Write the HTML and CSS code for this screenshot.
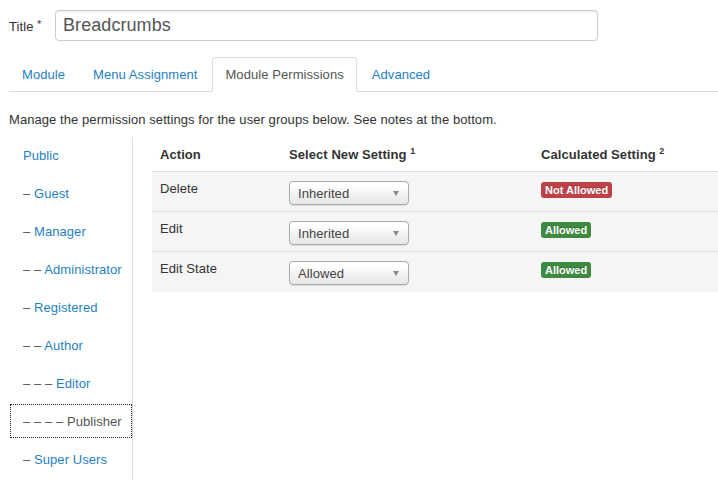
FILE: index.html
```html
<!DOCTYPE html>
<html>
<head>
<meta charset="utf-8">
<link rel="stylesheet" href="styles.css">
</head>
<body>
<div class="title-row">
  <label class="title-label">Title <span class="star">*</span></label>
  <div class="title-input">Breadcrumbs</div>
</div>

<ul class="tabs">
  <li class="tab"><a>Module</a></li>
  <li class="tab"><a>Menu Assignment</a></li>
  <li class="tab active"><a>Module Permissions</a></li>
  <li class="tab"><a>Advanced</a></li>
</ul>

<p class="intro">Manage the permission settings for the user groups below. See notes at the bottom.</p>

<div class="perm">
  <ul class="groups">
    <li class="group"><a>Public</a></li>
    <li class="group"><a><span class="lvl">–</span> Guest</a></li>
    <li class="group"><a><span class="lvl">–</span> Manager</a></li>
    <li class="group"><a><span class="lvl">– –</span> Administrator</a></li>
    <li class="group"><a><span class="lvl">–</span> Registered</a></li>
    <li class="group"><a><span class="lvl">– –</span> Author</a></li>
    <li class="group"><a><span class="lvl">– – –</span> Editor</a></li>
    <li class="group active"><a><span class="lvl">– – – –</span> Publisher</a></li>
    <li class="group"><a><span class="lvl">–</span> Super Users</a></li>
  </ul>

  <table class="ptable">
    <colgroup>
      <col class="c1"><col class="c2"><col class="c3">
    </colgroup>
    <thead>
      <tr>
        <th>Action</th>
        <th>Select New Setting <sup>1</sup></th>
        <th>Calculated Setting <sup>2</sup></th>
      </tr>
    </thead>
    <tbody>
      <tr>
        <td>Delete</td>
        <td><div class="select">Inherited<span class="caret"></span></div></td>
        <td><span class="badge badge-red">Not Allowed</span></td>
      </tr>
      <tr>
        <td>Edit</td>
        <td><div class="select">Inherited<span class="caret"></span></div></td>
        <td><span class="badge badge-green">Allowed</span></td>
      </tr>
      <tr>
        <td>Edit State</td>
        <td><div class="select">Allowed<span class="caret"></span></div></td>
        <td><span class="badge badge-green">Allowed</span></td>
      </tr>
    </tbody>
  </table>
</div>
</body>
</html>
```

FILE: styles.css
```css
* { box-sizing: border-box; }
html, body { background: #fff; }
body {
  margin: 0;
  padding: 10px 0 0 9px;
  font-family: "Liberation Sans", Arial, Helvetica, sans-serif;
  font-size: 13px;
  line-height: 18px;
  letter-spacing: 0.07px;
  color: #333;
}

.title-row {
  display: flex;
  align-items: center;
}
.title-label {
  width: 46px;
  font-size: 13px;
  color: #333;
}
.star {
  font-size: 11px;
  vertical-align: 3px;
}
.title-input {
  width: 543px;
  height: 31px;
  border: 1px solid #ccc;
  border-radius: 4px;
  box-shadow: inset 0 1px 1px rgba(0,0,0,0.075);
  padding: 0 7px;
  font-size: 18px;
  line-height: 29px;
  color: #555;
}

.tabs {
  list-style: none;
  margin: 16px 0 0 0;
  padding: 0;
  display: flex;
  border-bottom: 1px solid #ddd;
}
.tab {
  margin-right: 2px;
  margin-bottom: -1px;
}
.tab a {
  display: block;
  height: 35px;
  padding: 0 12px;
  line-height: 34px;
  color: #1f7fc3;
  border: 1px solid transparent;
  border-radius: 4px 4px 0 0;
}
.tab.active a {
  color: #555;
  background: #fff;
  border-color: #ddd #ddd transparent #ddd;
}

.intro {
  margin: 19px 0 8px 0;
  color: #333;
}

.perm {
  display: flex;
  align-items: flex-start;
}

.groups {
  list-style: none;
  margin: 0 19px 0 0;
  padding: 1px 0 4px 1px;
  width: 124px;
  border-right: 1px solid #ddd;
}
.group {
  margin-bottom: 4px;
}
.group:last-child { margin-bottom: 0; }
.group a {
  display: block;
  height: 34px;
  padding: 8px 12px;
  line-height: 18px;
  color: #1f7fc3;
  border: 1px solid transparent;
  white-space: nowrap;
}
.lvl { color: #555; }
.group.active a {
  color: #555;
  border: 1px dotted #222;
}

.ptable {
  border-collapse: collapse;
  width: 566px;
  table-layout: fixed;
}
.c1 { width: 129px; }
.c2 { width: 252px; }
.c3 { width: 185px; }
.ptable th {
  text-align: left;
  font-weight: bold;
  color: #333;
  padding: 9px 8px 7px 8px;
  height: 34px;
  vertical-align: top;
}
.ptable sup {
  font-size: 9px;
  line-height: 0;
  vertical-align: 5px;
}
.ptable td {
  border-top: 1px solid #ddd;
  background: #f5f5f5;
  padding: 8px 8px 7px 8px;
  height: 40px;
  vertical-align: top;
  color: #333;
}

.select {
  position: relative;
  width: 120px;
  height: 24px;
  margin-top: 1px;
  margin-bottom: -1px;
  border: 1px solid #aaa;
  border-radius: 4px;
  background: linear-gradient(#fff 20%, #f0f0f0 60%, #e8e8e8);
  box-shadow: 0 1px 1px rgba(0,0,0,0.1);
  padding: 0 8px;
  line-height: 24px;
  color: #444;
  font-size: 13px;
}
.caret {
  position: absolute;
  right: 9px;
  top: 9px;
  width: 0;
  height: 0;
  border-left: 3.5px solid transparent;
  border-right: 3.5px solid transparent;
  border-top: 5px solid #888;
}

.badge {
  display: inline-block;
  margin-top: 2px;
  padding: 0 4px;
  height: 16px;
  line-height: 16px;
  font-size: 11px;
  font-weight: bold;
  letter-spacing: 0;
  color: #fff;
  border-radius: 3px;
  text-shadow: 0 -1px 0 rgba(0,0,0,0.2);
}
.badge-red { background: #bd4247; }
.badge-green { background: #3d8a40; }
```
